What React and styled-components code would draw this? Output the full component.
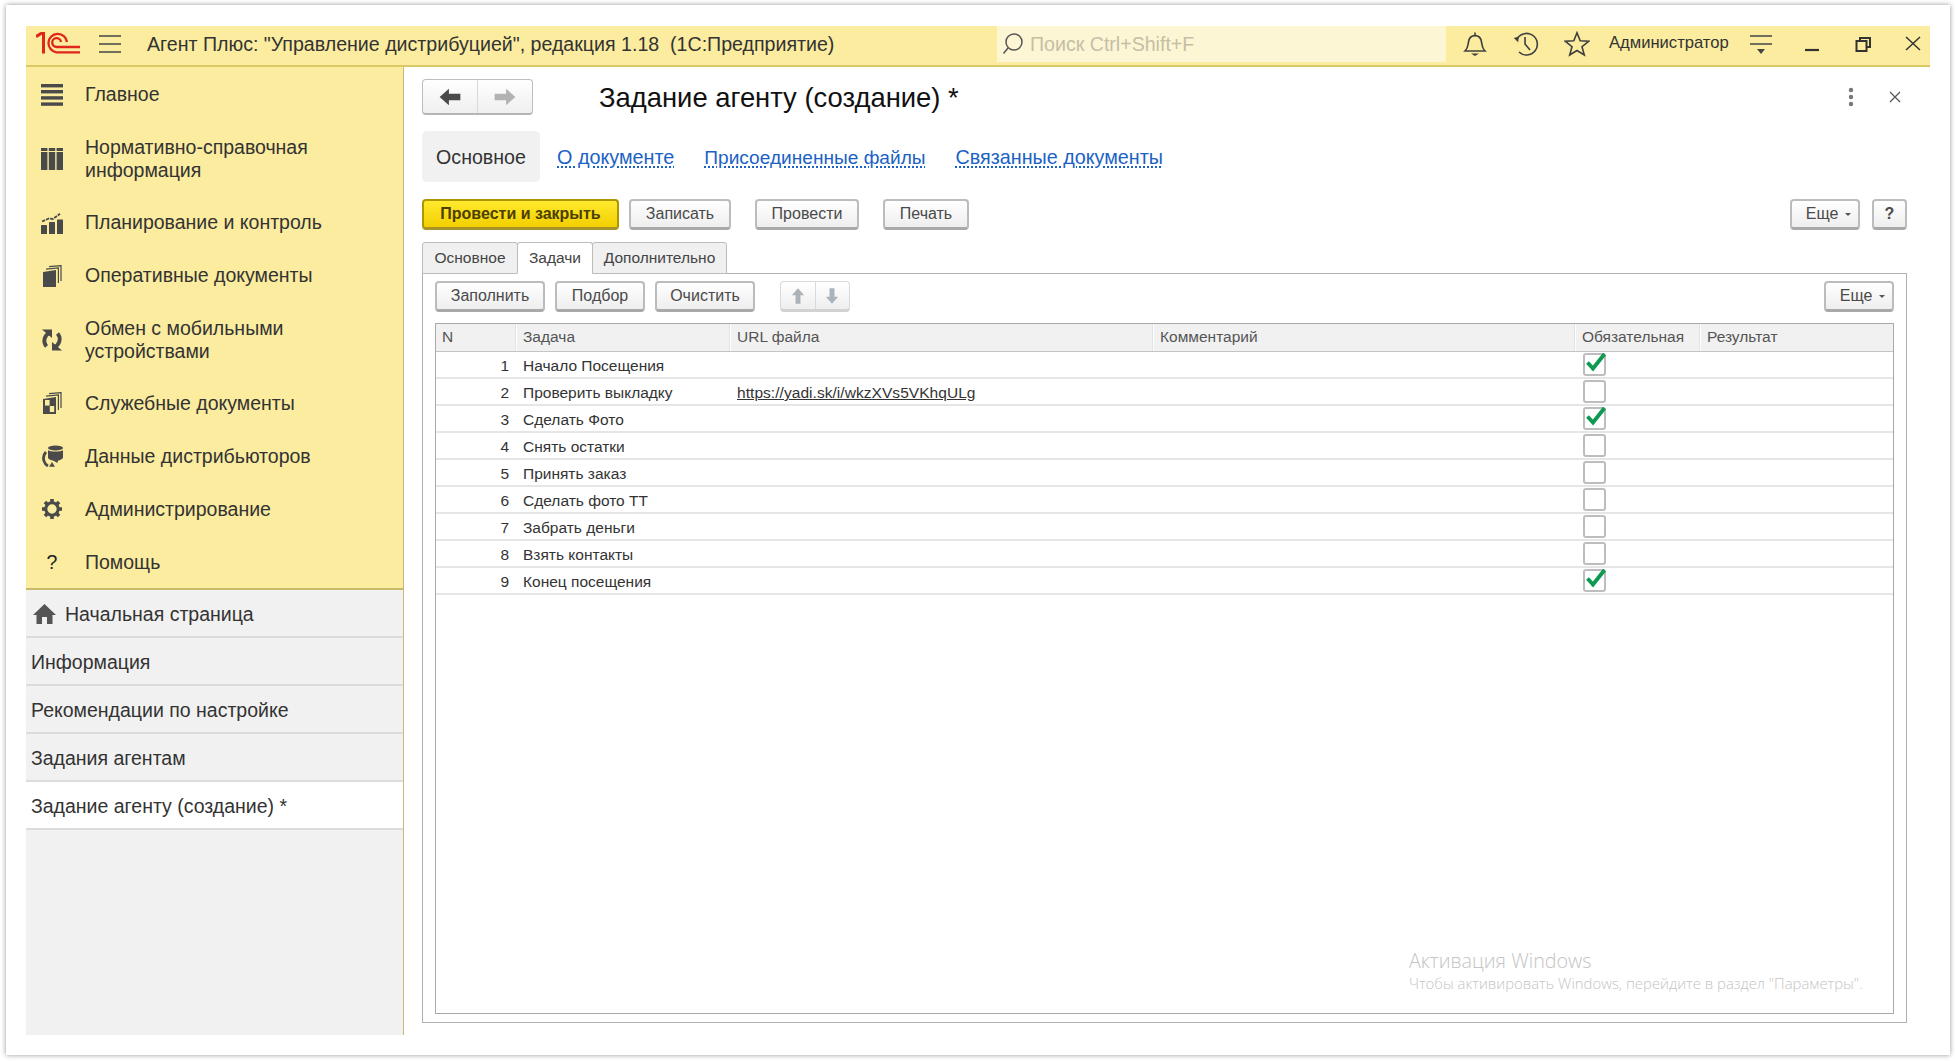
import React from "react";
import styled, { createGlobalStyle } from "styled-components";

const Global = createGlobalStyle`
  html, body { margin: 0; padding: 0; height: 100%; background: #fff; overflow: hidden; }
  * { box-sizing: border-box; }
  body { font-family: "Liberation Sans", Arial, sans-serif; color: #333; }
`;

const Frame = styled.div`
  position: relative;
  margin: 5px 0 0 6px;
  width: 1944px;
  height: 1050px;
  padding: 21px 20px 20px 20px;
  background: #fff;
  box-shadow: 0 0 5px rgba(0,0,0,.42);
  display: flex;
  flex-direction: column;
`;

const Header = styled.header`
  height: 41px;
  flex: none;
  background: #fbec9f;
  border-bottom: 2px solid #d9c864;
  display: flex;
  align-items: flex-start;
`;
const Logo = styled.svg`
  width: 44px; height: 22px; margin: 6px 0 0 10px; flex: none;
`;
const Burger = styled.svg`
  width: 22px; height: 18px; margin: 9px 0 0 19px; flex: none;
`;
const AppTitle = styled.div`
  font-size: 19.6px;
  line-height: 37px;
  margin-left: 26px;
  width: 850px;
  flex: none;
  color: #333;
  white-space: nowrap;
`;
const Search = styled.div`
  width: 449px;
  height: 36px;
  flex: none;
  background: #fdf6d4;
  display: flex;
  align-items: center;
  padding-left: 4px;
  gap: 5px;
  font-size: 19.6px;
  color: #c4bfa6;
  white-space: nowrap;
`;
const HeaderIcon = styled.svg`
  width: ${p => p.$w || 26}px;
  height: ${p => p.$w || 26}px;
  flex: none;
  margin-top: 5px;
  margin-left: ${p => p.$ml}px;
  color: #3f3f3f;
`;
const User = styled.div`
  font-size: 16.6px;
  line-height: 34px;
  margin-left: 19px;
  width: 120px;
  flex: none;
  white-space: nowrap;
  color: #333;
`;

const Body = styled.div`
  flex: 1;
  display: flex;
  min-height: 0;
`;
const Sidebar = styled.aside`
  width: 378px;
  flex: none;
  border-right: 1px solid #c9b972;
  display: flex;
  flex-direction: column;
  background: #f1f1f1;
`;
const Sections = styled.nav`
  background: #fbec9f;
  border-bottom: 2px solid #c9b96a;
  padding-top: 1px;
  height: 523px;
  flex: none;
`;
const Section = styled.div`
  display: flex;
  align-items: center;
  gap: 22px;
  padding: 15px 0 ${p => p.$pb || 15}px 15px;
  font-size: 19.5px;
  line-height: 23px;
  color: #333;
`;
const SectionIcon = styled.svg`
  width: 22px; height: 22px; flex: none; color: #4a4a4a;
`;
const HelpMark = styled.span`
  width: 22px; flex: none; text-align: center; font-size: 19.5px; color: #222;
`;
const OpenItem = styled.div`
  height: 48px;
  flex: none;
  display: flex;
  align-items: center;
  gap: 9px;
  padding: 2px 0 0 5px;
  font-size: 19.5px;
  color: #333;
  background: ${p => (p.$active ? "#fff" : "#f1f1f1")};
  border-bottom: 2px solid #dcdcdc;
`;
const HomeIcon = styled.svg`
  width: 23px; height: 20px; flex: none; margin-left: 2px; color: #555;
`;

const Main = styled.main`
  flex: 1;
  min-width: 0;
  padding: 12px 23px 12px 18px;
  display: flex;
  flex-direction: column;
`;
const TitleRow = styled.div`
  height: 36px;
  flex: none;
  display: flex;
  align-items: center;
`;
const NavGroup = styled.div`
  width: 111px;
  height: 36px;
  flex: none;
  display: flex;
  border: 1px solid #bdbdbd;
  border-bottom: 2px solid #b5b5b5;
  border-radius: 4px;
  background: linear-gradient(#fff, #efefef);
`;
const NavButton = styled.div`
  flex: 1;
  display: flex;
  align-items: center;
  justify-content: center;
  & + & { border-left: 1px solid #d8d8d8; }
`;
const Title = styled.h1`
  margin: 0 0 0 66px;
  padding-top: 2px;
  font-size: 27.4px;
  font-weight: 400;
  color: #111;
  white-space: nowrap;
  flex: 1;
`;
const TitleActions = styled.div`
  display: flex;
  align-items: center;
  gap: 35px;
  margin-right: 6px;
`;
const PageTabs = styled.div`
  margin-top: 16px;
  height: 51px;
  flex: none;
  display: flex;
  align-items: center;
`;
const PageTabActive = styled.div`
  width: 118px;
  height: 51px;
  background: #f1f1f1;
  border-radius: 5px;
  padding-top: 2px;
  display: flex;
  align-items: center;
  justify-content: center;
  font-size: 19.6px;
  color: #333;
`;
const PageLink = styled.a`
  margin: 2px 0 0 ${p => p.$ml}px;
  font-size: ${p => p.$size}px;
  color: #1b62c4;
  text-decoration: underline dotted;
  text-underline-offset: 3px;
  white-space: nowrap;
`;
const Toolbar = styled.div`
  height: 31px;
  flex: none;
  display: flex;
  align-items: stretch;
  margin-top: ${p => p.$mt || 0}px;
`;
const Button = styled.div`
  width: ${p => p.$w}px;
  margin-left: ${p => p.$ml || 0}px;
  flex: none;
  display: flex;
  align-items: center;
  justify-content: center;
  gap: 7px;
  font-size: 16px;
  font-weight: ${p => (p.$primary || p.$strong ? 700 : 400)};
  color: ${p => (p.$primary ? "#4b4000" : "#4a4a4a")};
  background: ${p => (p.$primary ? "linear-gradient(#ffe92e, #f2cf00)" : "linear-gradient(#fff, #eeeeee)")};
  border: 2px solid ${p => (p.$primary ? "#ae9600" : "#bcbcbc")};
  border-bottom: 3px solid ${p => (p.$primary ? "#a8932a" : "#a9a9a9")};
  border-radius: 4px;
  white-space: nowrap;
`;
const Caret = styled.span`
  width: 0; height: 0;
  margin-right: -7px;
  border-left: 3px solid transparent;
  border-right: 3px solid transparent;
  border-top: 3px solid #555;
`;
const Spacer = styled.div`
  flex: 1;
`;
const ArrowGroup = styled.div`
  width: 70px;
  margin-left: 25px;
  flex: none;
  display: flex;
  background: linear-gradient(#fff, #eee);
  border: 1px solid #dadada;
  border-bottom: 3px solid #d2d2d2;
  border-radius: 4px;
`;
const ArrowCell = styled.div`
  flex: 1;
  display: flex;
  align-items: center;
  justify-content: center;
  & + & { border-left: 1px solid #d9d9d9; }
`;
const InnerTabs = styled.div`
  margin-top: 12px;
  height: 32px;
  flex: none;
  display: flex;
  align-items: stretch;
  position: relative;
  z-index: 1;
`;
const InnerTab = styled.div`
  width: ${p => p.$w}px;
  flex: none;
  display: flex;
  align-items: center;
  justify-content: center;
  font-size: 15.5px;
  color: #444;
  background: ${p => (p.$active ? "#fff" : "#f0f0f0")};
  border: 1px solid #bcbcbc;
  border-bottom: ${p => (p.$active ? "1px solid #fff" : "1px solid #bcbcbc")};
  border-radius: 3px 3px 0 0;
  margin-left: ${p => (p.$first ? 0 : -1)}px;
`;
const Panel = styled.section`
  flex: 1;
  min-height: 0;
  margin-top: -1px;
  border: 1px solid #b0b0b0;
  padding: 7px 12px 8px 12px;
  display: flex;
  flex-direction: column;
`;
const Table = styled.div`
  margin-top: 11px;
  flex: 1;
  min-height: 0;
  border: 1px solid #a9a9a9;
  font-size: 15.5px;
`;
const HeadRow = styled.div`
  display: grid;
  grid-template-columns: 81px 214px 423px 422px 125px 1fr;
  height: 28px;
  background: #f1f1f1;
  border-bottom: 1px solid #c4c4c4;
`;
const HeadCell = styled.div`
  padding-left: 6px;
  line-height: 26px;
  color: #555;
  border-right: 1px solid #fff;
  box-shadow: inset -1px 0 0 #e2e2e2;
  white-space: nowrap;
  &:last-child { border-right: 0; box-shadow: none; }
`;
const Row = styled.div`
  display: grid;
  grid-template-columns: 81px 214px 423px 422px 125px 1fr;
  height: 27px;
  border-bottom: 2px solid #e6e6e6;
  line-height: 27px;
  color: #333;
`;
const NumCell = styled.div`
  text-align: right;
  padding-right: 8px;
`;
const Cell = styled.div`
  padding-left: 6px;
  white-space: nowrap;
`;
const UrlText = styled.span`
  text-decoration: underline;
  letter-spacing: .05px;
  color: #333;
`;
const CheckCell = styled.div`
  padding: 1px 0 0 7px;
`;
const Check = styled.div`
  position: relative;
  width: 23px;
  height: 23px;
  border: 2px solid #bdbdbd;
  border-radius: 3px;
  background: #fff;
`;
const CheckMark = styled.svg`
  position: absolute;
  left: 0;
  top: -3px;
  width: 21px;
  height: 20px;
`;
const Watermark = styled.div`
  position: absolute;
  left: 1403px;
  top: 943px;
  font-family: "Open Sans", "Noto Sans", sans-serif;
  font-weight: 300;
  color: #c4c4c4;
  pointer-events: none;
`;
const WatermarkTitle = styled.div`
  font-size: 19.7px;
  line-height: 26px;
`;
const WatermarkText = styled.div`
  font-size: 14.9px;
  line-height: 19px;
  white-space: nowrap;
`;

const icons = {
  menu: <g fill="currentColor"><rect y="0" width="22" height="3.4" /><rect y="6" width="22" height="3.4" /><rect y="12.2" width="22" height="3.4" /><rect y="18.4" width="22" height="3.4" /></g>,
  table: <g fill="currentColor"><rect x="0" y="0" width="6.4" height="22" /><rect x="7.8" y="0" width="6.4" height="22" /><rect x="15.6" y="0" width="6.4" height="22" /><rect x="0" y="3" width="22" height="1" fill="#fbec9f" /></g>,
  chart: <g fill="currentColor"><rect x="0" y="13" width="6" height="9" rx=".6" /><rect x="8" y="10" width="6" height="12" rx=".6" /><rect x="16" y="7.5" width="6" height="14.5" rx=".6" /><path d="M1 9.5 L8 6.5 L12 7 L19 1.8" fill="none" stroke="currentColor" strokeWidth="1.8" strokeDasharray="3.4 1" /></g>,
  docs: <g><path d="M2 7 L15 5 V22 H2 Z" fill="currentColor" /><path d="M5 4.2 L17.4 2.8 V18" fill="none" stroke="currentColor" strokeWidth="1.2" /><path d="M8 1.6 L20 .6 V16" fill="none" stroke="currentColor" strokeWidth="1.2" /></g>,
  refresh: <g fill="none" stroke="currentColor" strokeWidth="3.8"><path d="M5.5 17.5 A8.5 8.5 0 0 1 9 3.8" /><path d="M16.5 4.5 A8.5 8.5 0 0 1 13 18.2" /><path d="M1 .5 H11 V9 Z" fill="currentColor" stroke="none" /><path d="M21 21.5 H11 V13 Z" fill="currentColor" stroke="none" /></g>,
  service: <g><path d="M2 7 L15 5 V22 H2 Z" fill="currentColor" /><rect x="4" y="8" width="4.6" height="5.6" fill="#fbec9f" /><rect x="8.8" y="14" width="4.4" height="6" fill="#fbec9f" /><path d="M5 4.2 L17.4 2.8 V18" fill="none" stroke="currentColor" strokeWidth="1.2" /><path d="M8 1.6 L20 .6 V16" fill="none" stroke="currentColor" strokeWidth="1.2" /></g>,
  data: <g><ellipse cx="14.5" cy="3" rx="7.5" ry="2.4" fill="currentColor" /><path d="M7 5.2 C9 7 20 7 22 5.2 V13 C20 15 18 15.4 17 15.6 L16.5 18 L12 15.6 C10 15.4 8 14.6 7 13 Z" fill="currentColor" /><path d="M5 7 A9 9 0 0 0 3 16 A8 8 0 0 0 7 21" fill="none" stroke="currentColor" strokeWidth="2.8" /><path d="M11 17 L14 21.8 L8 21.8 Z" fill="currentColor" /></g>,
  gear: <g><circle cx="11" cy="11" r="6.2" fill="none" stroke="currentColor" strokeWidth="3" /><g stroke="currentColor" strokeWidth="3.6">{[0,45,90,135].map(a => <path key={a} d="M11 1 V5 M11 17 V21" transform={`rotate(${a} 11 11)`} />)}</g></g>,
};

const sections = [
  { icon: "menu", label: "Главное" },
  { icon: "table", label: <>Нормативно-справочная<br />информация</>, pb: 14 },
  { icon: "chart", label: "Планирование и контроль" },
  { icon: "docs", label: "Оперативные документы" },
  { icon: "refresh", label: <>Обмен с мобильными<br />устройствами</>, pb: 13.5 },
  { icon: "service", label: "Служебные документы" },
  { icon: "data", label: "Данные дистрибьюторов" },
  { icon: "gear", label: "Администрирование" },
];

const openItems = ["Информация", "Рекомендации по настройке", "Задания агентам"];

const rows = [
  ["Начало Посещения", "", true],
  ["Проверить выкладку", "https://yadi.sk/i/wkzXVs5VKhqULg", false],
  ["Сделать Фото", "", true],
  ["Снять остатки", "", false],
  ["Принять заказ", "", false],
  ["Сделать фото ТТ", "", false],
  ["Забрать деньги", "", false],
  ["Взять контакты", "", false],
  ["Конец посещения", "", true],
];

const Arrow = ({ dir, color, size = 22 }) => {
  const rot = { left: 0, right: 180, up: 90, down: 270 }[dir];
  return (
    <svg width={size} height={size} viewBox="0 0 22 22">
      <path d="M1.5 11 L10 3.5 V8 H20.5 V14 H10 V18.5 Z" fill={color} transform={`rotate(${rot} 11 11)`} />
    </svg>
  );
};

export default function App() {
  return (
    <>
      <Global />
      <Frame>
        <Header>
          <Logo viewBox="0 0 44 22">
            <g fill="none" stroke="#e1251b" strokeWidth="2.3">
              <path d="M0 4.6 L5.4 1.3 H7.5 V21.5" strokeWidth="3" />
              <path d="M44 20.3 H20.5 A9.3 9.3 0 1 1 31 10" />
              <path d="M44 15 H20.8 A4.4 4.4 0 1 1 25 10" />
            </g>
          </Logo>
          <Burger viewBox="0 0 22 18">
            <g stroke="#444" strokeWidth="1.5"><path d="M0 1 H22 M0 9 H22 M0 17 H22" /></g>
          </Burger>
          <AppTitle>Агент Плюс: "Управление дистрибуцией", редакция 1.18&nbsp;&nbsp;(1С:Предприятие)</AppTitle>
          <Search>
            <svg width="24" height="24" viewBox="0 0 24 24" fill="none" stroke="#555" strokeWidth="1.5"><circle cx="13" cy="10" r="8" /><path d="M7 16 L2.5 21.5" /></svg>
            <span>Поиск Ctrl+Shift+F</span>
          </Search>
          <HeaderIcon $ml={16} viewBox="0 0 26 26" fill="none" stroke="currentColor" strokeWidth="1.6">
            <path d="M3 20 C6 17 6 14 6.5 11 C7 7 9.5 4.6 13 4.6 C16.5 4.6 19 7 19.5 11 C20 14 20 17 23 20 Z" />
            <path d="M13 1.4 V4.6" />
            <path d="M9 22.5 H17 L13 25 Z" fill="currentColor" stroke="none" />
          </HeaderIcon>
          <HeaderIcon $ml={25} viewBox="0 0 26 26" fill="none" stroke="currentColor" strokeWidth="1.6">
            <path d="M3.6 9 A10.8 10.8 0 1 1 6 21" />
            <path d="M.8 7 L5.8 5.4 L5.2 11.2 Z" fill="currentColor" stroke="none" />
            <path d="M12 6 V13 L17 19" />
          </HeaderIcon>
          <HeaderIcon $ml={25} viewBox="0 0 26 26" fill="none" stroke="currentColor" strokeWidth="1.6">
            <path d="M13 1.8 L16.2 9.8 L24.6 10.3 L18 15.7 L20.3 24 L13 19.5 L5.7 24 L8 15.7 L1.4 10.3 L9.8 9.8 Z" />
          </HeaderIcon>
          <User>Администратор</User>
          <HeaderIcon $ml={20} $w={24} viewBox="0 0 24 24" fill="none" stroke="#444" strokeWidth="1.6">
            <path d="M1 5 H23 M1 13 H23" />
            <path d="M8 18 H16 L12 23 Z" fill="#444" stroke="none" />
          </HeaderIcon>
          <HeaderIcon $ml={28} $w={22} viewBox="0 0 22 22" fill="none" stroke="#333" strokeWidth="2.2">
            <path d="M4 19 H18" />
          </HeaderIcon>
          <HeaderIcon $ml={29} $w={22} viewBox="0 0 22 22" fill="none" stroke="#333" strokeWidth="2">
            <rect x="4.5" y="10" width="10" height="10" />
            <path d="M8 10 V7 H18 V16 H14.5" />
          </HeaderIcon>
          <HeaderIcon $ml={28} $w={22} viewBox="0 0 22 22" fill="none" stroke="#333" strokeWidth="1.5">
            <path d="M4 6 L18 19 M18 6 L4 19" />
          </HeaderIcon>
        </Header>
        <Body>
          <Sidebar>
            <Sections>
              {sections.map(s => (
                <Section key={s.icon} $pb={s.pb}>
                  <SectionIcon viewBox="0 0 22 22">{icons[s.icon]}</SectionIcon>
                  <div>{s.label}</div>
                </Section>
              ))}
              <Section>
                <HelpMark>?</HelpMark>
                <div>Помощь</div>
              </Section>
            </Sections>
            <OpenItem>
              <HomeIcon viewBox="0 0 23 20"><path d="M11.5 0 L23 11 H19.5 V20 H14 V13 H9 V20 H3.5 V11 H0 Z" fill="currentColor" /></HomeIcon>
              Начальная страница
            </OpenItem>
            {openItems.map(t => <OpenItem key={t}>{t}</OpenItem>)}
            <OpenItem $active>Задание агенту (создание) *</OpenItem>
          </Sidebar>
          <Main>
            <TitleRow>
              <NavGroup>
                <NavButton><Arrow dir="left" color="#4a4a4a" size={24} /></NavButton>
                <NavButton><Arrow dir="right" color="#b2b2b2" size={24} /></NavButton>
              </NavGroup>
              <Title>Задание агенту (создание) *</Title>
              <TitleActions>
                <svg width="6" height="20" viewBox="0 0 6 20" fill="#777"><circle cx="3" cy="3" r="2.2" /><circle cx="3" cy="10" r="2.2" /><circle cx="3" cy="17" r="2.2" /></svg>
                <svg width="12" height="12" viewBox="0 0 12 12" fill="none" stroke="#555" strokeWidth="1.2"><path d="M1 1 L11 11 M11 1 L1 11" /></svg>
              </TitleActions>
            </TitleRow>
            <PageTabs>
              <PageTabActive>Основное</PageTabActive>
              <PageLink $ml={17} $size={19.8}>О документе</PageLink>
              <PageLink $ml={30} $size={19.1}>Присоединенные файлы</PageLink>
              <PageLink $ml={30} $size={19.75}>Связанные документы</PageLink>
            </PageTabs>
            <Toolbar $mt={17}>
              <Button $primary $w={197}>Провести и закрыть</Button>
              <Button $w={102} $ml={10}>Записать</Button>
              <Button $w={104} $ml={24}>Провести</Button>
              <Button $w={86} $ml={24}>Печать</Button>
              <Spacer />
              <Button $w={70}>Еще <Caret /></Button>
              <Button $w={35} $ml={12} $strong>?</Button>
            </Toolbar>
            <InnerTabs>
              <InnerTab $first $w={96}>Основное</InnerTab>
              <InnerTab $active $w={76}>Задачи</InnerTab>
              <InnerTab $w={135}>Дополнительно</InnerTab>
            </InnerTabs>
            <Panel>
              <Toolbar>
                <Button $w={110}>Заполнить</Button>
                <Button $w={90} $ml={10}>Подбор</Button>
                <Button $w={100} $ml={10}>Очистить</Button>
                <ArrowGroup>
                  <ArrowCell><Arrow dir="up" color="#aab3ba" size={18} /></ArrowCell>
                  <ArrowCell><Arrow dir="down" color="#aab3ba" size={18} /></ArrowCell>
                </ArrowGroup>
                <Spacer />
                <Button $w={70}>Еще <Caret /></Button>
              </Toolbar>
              <Table>
                <HeadRow>
                  {["N", "Задача", "URL файла", "Комментарий", "Обязательная", "Результат"].map(h => <HeadCell key={h}>{h}</HeadCell>)}
                </HeadRow>
                {rows.map(([task, url, checked], i) => (
                  <Row key={task}>
                    <NumCell>{i + 1}</NumCell>
                    <Cell>{task}</Cell>
                    <Cell>{url && <UrlText>{url}</UrlText>}</Cell>
                    <Cell />
                    <CheckCell>
                      <Check>
                        {checked && (
                          <CheckMark viewBox="0 0 21 20"><path d="M2.5 10.5 L8 16.5 L19.5 2" fill="none" stroke="#0d9a50" strokeWidth="3.8" /></CheckMark>
                        )}
                      </Check>
                    </CheckCell>
                    <Cell />
                  </Row>
                ))}
              </Table>
            </Panel>
          </Main>
        </Body>
        <Watermark>
          <WatermarkTitle>Активация Windows</WatermarkTitle>
          <WatermarkText>Чтобы активировать Windows, перейдите в раздел "Параметры".</WatermarkText>
        </Watermark>
      </Frame>
    </>
  );
}
